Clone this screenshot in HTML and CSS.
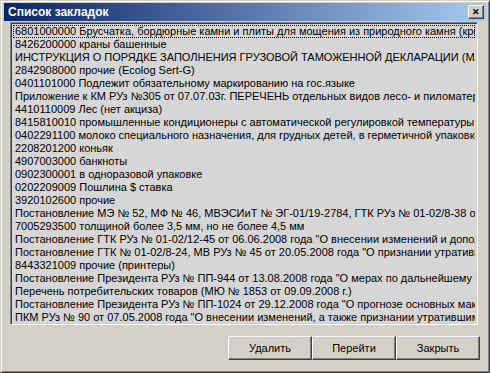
FILE: index.html
```html
<!DOCTYPE html>
<html lang="ru">
<head>
  <meta charset="UTF-8">
  <title>Список закладок</title>
  <link rel="stylesheet" href="styles.css">
</head>
<body>

<div class="window">
  <div class="titlebar">
    <span class="title">Список закладок</span>
    <span class="close-btn">&#x2715;</span>
  </div>

  <!-- Список закладок -->
  <div class="listbox">
    <div class="item focused">6801000000 Брусчатка, бордюрные камни и плиты для мощения из природного камня (кроме сланца)</div>
    <div class="item">8426200000 краны башенные</div>
    <div class="item">ИНСТРУКЦИЯ О ПОРЯДКЕ ЗАПОЛНЕНИЯ ГРУЗОВОЙ ТАМОЖЕННОЙ ДЕКЛАРАЦИИ (МАЙ)</div>
    <div class="item">2842908000 прочие (Ecolog Sert-G)</div>
    <div class="item">0401101000 Подлежит обязательному маркированию на гос.языке</div>
    <div class="item">Приложение к КМ РУз №305 от 07.07.03г. ПЕРЕЧЕНЬ отдельных видов лесо- и пиломатериалов</div>
    <div class="item">4410110009 Лес (нет акциза)</div>
    <div class="item">8415810010 промышленные кондиционеры с автоматической регулировкой температуры и влажности</div>
    <div class="item">0402291100 молоко специального назначения, для грудных детей, в герметичной упаковке</div>
    <div class="item">2208201200 коньяк</div>
    <div class="item">4907003000 банкноты</div>
    <div class="item">0902300001 в одноразовой упаковке</div>
    <div class="item">0202209009 Пошлина $ ставка</div>
    <div class="item">3920102600 прочие</div>
    <div class="item">Постановление МЭ № 52, МФ № 46, МВЭСИиТ № ЭГ-01/19-2784, ГТК РУз № 01-02/8-38 от 2008</div>
    <div class="item">7005293500 толщиной более 3,5 мм, но не более 4,5 мм</div>
    <div class="item">Постановление ГТК РУз № 01-02/12-45 от 06.06.2008 года "О внесении изменений и дополнений"</div>
    <div class="item">Постановление ГТК № 01-02/8-24, МВ РУз № 45 от 20.05.2008 года "О признании утратившими силу"</div>
    <div class="item">8443321009 прочие (принтеры)</div>
    <div class="item">Постановление Президента РУз № ПП-944 от 13.08.2008 года "О мерах по дальнейшему государственному"</div>
    <div class="item">Перечень потребительских товаров (МЮ № 1853 от 09.09.2008 г.)</div>
    <div class="item">Постановление Президента РУз № ПП-1024 от 29.12.2008 года "О прогнозе основных макроэкономических"</div>
    <div class="item">ПКМ РУз № 90 от 07.05.2008 года "О внесении изменений, а также признании утратившими силу"</div>
  </div>

  <div class="buttons">
    <button class="btn">Удалить</button>
    <button class="btn">Перейти</button>
    <button class="btn">Закрыть</button>
  </div>
</div>

</body>
</html>
```

FILE: styles.css
```css
body {
  margin: 0;
  background-color: #d4d0c8;
  font-family: "Liberation Sans", Arial, sans-serif;
  font-size: 11px;
}

/* Окно */
.window {
  width: 490px;
  height: 373px;
  box-sizing: border-box;
  background-color: #d4d0c8;
  border-top: 1px solid #d4d0c8;
  border-left: 1px solid #d4d0c8;
  border-right: 1px solid #404040;
  border-bottom: 1px solid #404040;
  box-shadow: inset 1px 1px 0 #ffffff, inset -1px -1px 0 #808080;
  padding: 2px 3px 3px 3px;
  display: flex;
  flex-direction: column;
}

.titlebar {
  height: 18px;
  background: linear-gradient(to right, #0a246a, #a6caf0);
  display: flex;
  align-items: center;
  justify-content: space-between;
  padding: 0 2px 0 4px;
}

.title {
  color: #ffffff;
  font-weight: bold;
  font-size: 12px;
}

.close-btn {
  width: 16px;
  height: 14px;
  box-sizing: border-box;
  background-color: #d4d0c8;
  border-top: 1px solid #ffffff;
  border-left: 1px solid #ffffff;
  border-right: 1px solid #404040;
  border-bottom: 1px solid #404040;
  box-shadow: inset -1px -1px 0 #808080;
  font-size: 9px;
  font-weight: bold;
  line-height: 12px;
  text-align: center;
  color: #000000;
}

/* Список */
.listbox {
  margin: 1px 8px 0 6px;
  height: 303px;
  box-sizing: border-box;
  background-color: #d6d6d6;
  border-top: 1px solid #808080;
  border-left: 1px solid #808080;
  border-right: 1px solid #ffffff;
  border-bottom: 1px solid #ffffff;
  box-shadow: inset 1px 1px 0 #404040, inset -1px -1px 0 #d4d0c8;
  padding: 2px 2px;
  overflow: hidden;
}

.item {
  height: 13px;
  line-height: 13px;
  padding-left: 2px;
  white-space: nowrap;
  overflow: hidden;
  color: #000000;
}

.focused {
  outline: 1px dotted #000000;
  outline-offset: -1px;
}

/* Кнопки */
.buttons {
  display: flex;
  justify-content: flex-end;
  margin-top: 11px;
  padding-right: 6px;
}

.btn {
  width: 84px;
  height: 24px;
  margin: 0;
  padding: 0;
  background-color: #d4d0c8;
  font-family: "Liberation Sans", Arial, sans-serif;
  font-size: 11px;
  color: #000000;
  border-top: 1px solid #ffffff;
  border-left: 1px solid #ffffff;
  border-right: 1px solid #404040;
  border-bottom: 1px solid #404040;
  box-shadow: inset -1px -1px 0 #808080;
}
```
